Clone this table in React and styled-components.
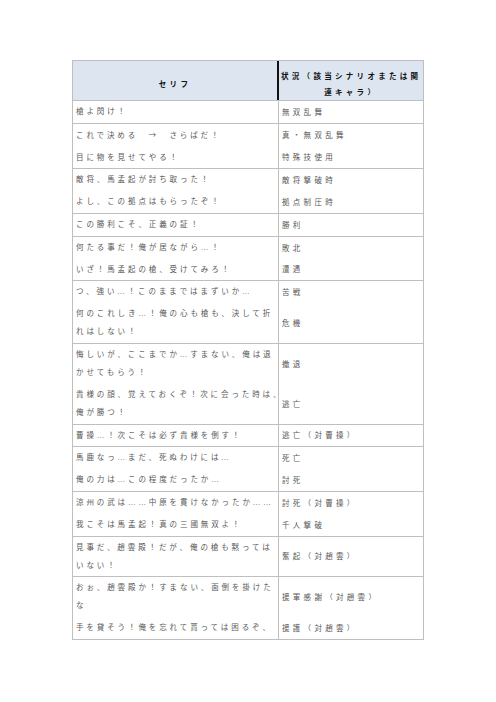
import React from "react";
import styled, { createGlobalStyle } from "styled-components";

const Global = createGlobalStyle`
  html, body { margin: 0; padding: 0; background: #ffffff; }
  body { font-family: "Noto Sans CJK JP", "Noto Sans", sans-serif; }
`;

const Table = styled.div`
  margin: 60px 0 0 72px;
  width: 352px;
  border: 1px solid #bfbfbf;
  box-sizing: border-box;
  font-family: "Noto Sans CJK JP", "Noto Sans", sans-serif;
`;

const HeaderRow = styled.div`
  display: grid;
  grid-template-columns: 206px 1fr;
  height: 39px;
  background: #dde6f0;
  border-bottom: 1px solid #bfbfbf;
`;

const HeaderCell = styled.div`
  box-sizing: border-box;
  display: flex;
  flex-direction: column;
  align-items: center;
  justify-content: center;
  padding: 7px 2px 0;
  font-size: 7.5px;
  font-weight: 700;
  line-height: 16px;
  letter-spacing: 3.3px;
  color: #111;
  text-align: center;
  border-right: ${(p) => (p.$divider ? "2px solid #111" : "none")};
  white-space: nowrap;
`;

const Group = styled.div`
  display: grid;
  grid-template-columns: 206px 1fr;
  border-top: ${(p) => (p.$first ? "none" : "1px solid #bfbfbf")};
`;

const Speech = styled.div`
  box-sizing: border-box;
  border-right: 1px solid #bfbfbf;
  padding: 2px 0 1.8px 3px;
  font-family: "Liberation Serif", "Noto Sans CJK JP", serif;
  font-size: 7.5px;
  line-height: 18px;
  letter-spacing: 2.9px;
  color: #595959;
  white-space: nowrap;
`;

const Arrow = styled.span`
  font-family: "Noto Sans CJK JP", sans-serif;
`;

const Situation = styled.div`
  box-sizing: border-box;
  display: flex;
  align-items: center;
  padding: 0 0 0 3px;
  font-size: 7.5px;
  line-height: 18px;
  letter-spacing: 3.3px;
  color: #595959;
  white-space: nowrap;
`;

const Line = styled.span`
  display: block;
`;

const groups = [
  [[["槍よ閃け！"], "無双乱舞"]],
  [
    [[<>これで決める　<Arrow>→</Arrow>　さらばだ！</>], "真・無双乱舞"],
    [["目に物を見せてやる！"], "特殊技使用"],
  ],
  [
    [["敵将、馬孟起が討ち取った！"], "敵将撃破時"],
    [["よし、この拠点はもらったぞ！"], "拠点制圧時"],
  ],
  [[["この勝利こそ、正義の証！"], "勝利"]],
  [
    [["何たる事だ！俺が居ながら…！"], "敗北"],
    [["いざ！馬孟起の槍、受けてみろ！"], "遭遇"],
  ],
  [
    [["つ、強い…！このままではまずいか…"], "苦戦"],
    [["何のこれしき…！俺の心も槍も、決して折", "れはしない！"], "危機"],
  ],
  [
    [["悔しいが、ここまでか…すまない、俺は退", "かせてもらう！"], "撤退"],
    [["貴様の顔、覚えておくぞ！次に会った時は、", "俺が勝つ！"], "逃亡"],
  ],
  [[["曹操…！次こそは必ず貴様を倒す！"], "逃亡（対曹操）"]],
  [
    [["馬鹿なっ…まだ、死ぬわけには…"], "死亡"],
    [["俺の力は…この程度だったか…"], "討死"],
  ],
  [
    [["涼州の武は……中原を貫けなかったか……"], "討死（対曹操）"],
    [["我こそは馬孟起！真の三國無双よ！"], "千人撃破"],
  ],
  [[["見事だ、趙雲殿！だが、俺の槍も黙っては", "いない！"], "奮起（対趙雲）"]],
  [
    [["おぉ、趙雲殿か！すまない、面倒を掛けた", "な"], "援軍感謝（対趙雲）"],
    [["手を貸そう！俺を忘れて貰っては困るぞ、"], "援護（対趙雲）"],
  ],
];

export default function App() {
  return (
    <>
      <Global />
      <Table>
        <HeaderRow>
          <HeaderCell $divider>セリフ</HeaderCell>
          <HeaderCell>
            <Line>状況（該当シナリオまたは関</Line>
            <Line>連キャラ）</Line>
          </HeaderCell>
        </HeaderRow>
        {groups.map((entries, gi) => (
          <Group key={gi} $first={gi === 0}>
            {entries.map(([lines, situation], ei) => (
              <React.Fragment key={ei}>
                <Speech>
                  {lines.map((l, li) => (
                    <Line key={li}>{l}</Line>
                  ))}
                </Speech>
                <Situation>{situation}</Situation>
              </React.Fragment>
            ))}
          </Group>
        ))}
      </Table>
    </>
  );
}
